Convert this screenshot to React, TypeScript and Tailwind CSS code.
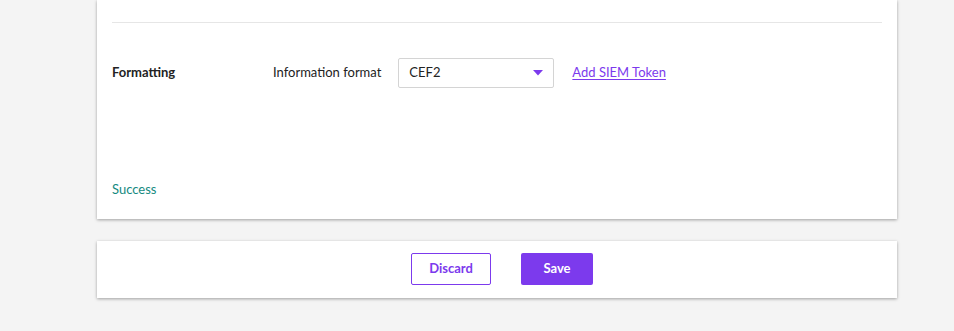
import { useState } from 'react'

function Caret() {
  return (
    <svg width="10" height="6" viewBox="0 0 10 6" className="shrink-0">
      <path d="M0 0 L10 0 L5 5.5 Z" fill="#7c3aed" />
    </svg>
  )
}

export default function App() {
  const [format] = useState('CEF2')

  return (
    <div
      className="min-h-[331px] w-full bg-[#f4f4f4] text-[#222]"
      style={{ fontFamily: 'Lato, "Open Sans", sans-serif' }}
    >
      <div className="ml-[97px] w-[800px]">
        {/* Settings card */}
        <div className="bg-white px-[15px] shadow-[0_1px_3px_rgba(0,0,0,0.35)]">
          <div className="h-[23px] border-b border-[#e6e6e6]" />

          <div className="flex h-[100px] items-center">
            <div className="w-[161px] text-[13px] font-bold">Formatting</div>
            <label className="mr-[17px] text-[13px]">Information format</label>
            <div className="flex h-[30px] w-[156px] items-center justify-between rounded-[2px] border border-[#d4d4d4] pl-[10px] pr-[10px] text-[13px]">
              <span>{format}</span>
              <Caret />
            </div>
            <a
              href="#"
              className="ml-[18px] text-[13px] text-[#7c3aed] underline underline-offset-2"
            >
              Add SIEM Token
            </a>
          </div>

          <div className="flex h-[96px] items-end pb-[20px]">
            <span className="text-[13px] text-[#148a80]">Success</span>
          </div>
        </div>

        {/* Actions card */}
        <div className="mt-[22px] flex h-[57px] items-start justify-center gap-[30px] bg-white pl-[10px] pt-[12px] shadow-[0_1px_3px_rgba(0,0,0,0.35)]">
          <button className="h-[32px] w-[80px] rounded-[2px] border border-[#7c3aed] bg-white text-[13px] font-bold text-[#7c3aed]">
            Discard
          </button>
          <button className="h-[32px] w-[72px] rounded-[2px] bg-[#7c3aed] text-[13px] font-bold text-white">
            Save
          </button>
        </div>
      </div>
    </div>
  )
}
